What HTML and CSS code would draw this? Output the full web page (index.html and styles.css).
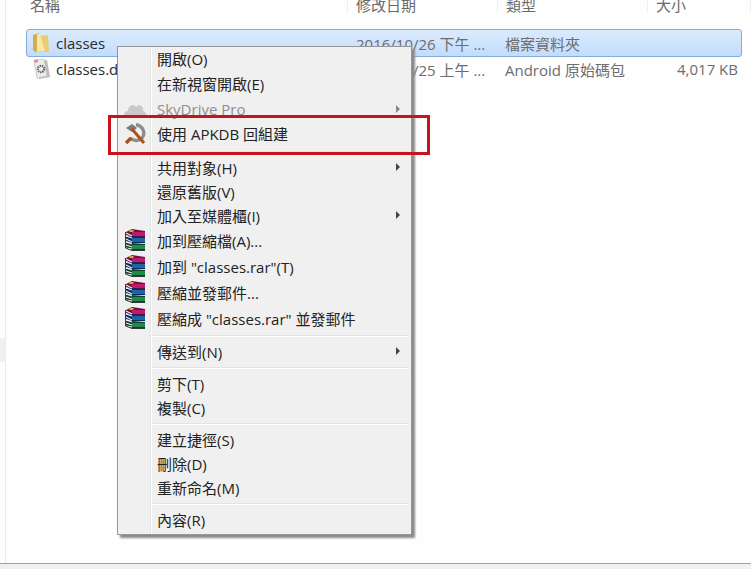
FILE: index.html
```html
<!DOCTYPE html>
<html lang="zh-Hant">
<head>
    <meta charset="UTF-8">
    <title>classes</title>
    <link rel="stylesheet" href="styles.css">
</head>
<body>
    <svg class="defs" width="0" height="0">
      <symbol id="rar" viewBox="0 0 22 22">
        <path d="M2 3 L8 0 L21 2 L21 8 L8 8 L2 6Z" fill="#6e1240"/>
        <path d="M8 3 L21 3 L21 7 L8 7Z" fill="#c2186e"/>
        <path d="M6 1 L10 1 L9 3 L5 3Z" fill="#d8a838"/>
        <path d="M2 8 L8 7 L21 8 L21 14 L8 14 L2 12Z" fill="#10285e"/>
        <path d="M8 9 L21 9 L21 13 L8 13Z" fill="#1c64a8"/>
        <path d="M2 14 L8 14 L21 15 L21 21 L8 21 L2 19Z" fill="#0c4426"/>
        <path d="M8 16 L21 16 L21 20 L8 20Z" fill="#1c8c4c"/>
        <path d="M2 4 L8 7 M2 7 L8 9 M2 10 L8 13 M2 13 L8 15 M2 16 L8 18 M2 19 L8 20" stroke="#f0f0f0" stroke-width="1.1" fill="none"/>
        <path d="M1.5 3 L1.5 19 L8 21.5 L21 21.5" stroke="#222" stroke-width=".9" fill="none"/>
      </symbol>
    </svg>

    <div class="explorer">
      <div class="list-head">
        <div class="head-cell">名稱</div>
        <div class="head-cell">修改日期</div>
        <div class="head-cell">類型</div>
        <div class="head-cell">大小</div>
      </div>

      <div class="file-row selected">
        <div class="cell name">
          <svg class="file-icon" viewBox="0 0 20 20">
            <path d="M2 2 L8 0 L9 2 L9 19 L4 19 L2 17Z" fill="#d4ae48"/>
            <path d="M9 3 L17 2 L18 19 L9 19Z" fill="#e8cb72"/>
            <path d="M6 1 L9 1 L14 18 L6 19Z" fill="#f7e8a8"/>
          </svg>
          classes
        </div>
        <div class="cell muted">2016/10/26 下午 ...</div>
        <div class="cell muted">檔案資料夾</div>
        <div class="cell size"></div>
      </div>

      <div class="file-row">
        <div class="cell name">
          <svg class="file-icon" viewBox="0 0 20 20">
            <path d="M5 3 L16 1 L19 18 L8 20Z" fill="#bdbdbd"/>
            <path d="M3 1 L13 0 L16 17 L6 19Z" fill="#ededed" stroke="#c0c0c0" stroke-width=".8"/>
            <path d="M3 1 L7 1 L7 3 L4 4Z" fill="#e88a8a"/>
            <circle cx="10" cy="10" r="3.2" fill="none" stroke="#666" stroke-width="2.2" stroke-dasharray="1.4 .8"/>
          </svg>
          classes.dex
        </div>
        <div class="cell muted">2016/10/25 上午 ...</div>
        <div class="cell muted">Android 原始碼包</div>
        <div class="cell size muted">4,017 KB</div>
      </div>
    </div>

    <div class="side-tab"></div>

    <div class="menu">
      <div class="item"><span class="gutter"></span>開啟(O)</div>
      <div class="item"><span class="gutter"></span>在新視窗開啟(E)</div>
      <div class="item disabled">
        <span class="gutter">
          <svg class="menu-icon" viewBox="0 0 22 22">
            <path d="M4 20 C-1 20 -1 13 4 13 C4 7 10 5 12 9 C15 5 20 8 19 13 C23 13 23 20 18 20Z" fill="#c9c9c9"/>
          </svg>
        </span>
        SkyDrive Pro<span class="arrow"></span>
      </div>
      <div class="item">
        <span class="gutter">
          <svg class="menu-icon" viewBox="0 0 22 22">
            <path d="M12 1.5 C19 3 22 10 18 15 C15 18.5 9 18 6 15" fill="none" stroke="#8c8c8c" stroke-width="3.4"/>
            <path d="M2 5 L8 1 L13 5 L8 9Z" fill="#7a7a7a"/>
            <path d="M8 6 L20 20" stroke="#b0501c" stroke-width="3"/>
            <path d="M7 15 L2 20" stroke="#b0501c" stroke-width="3.4"/>
          </svg>
        </span>
        使用 APKDB 回組建
      </div>

      <div class="sep first"></div>

      <div class="item short"><span class="gutter"></span>共用對象(H)<span class="arrow"></span></div>
      <div class="item short"><span class="gutter"></span>還原舊版(V)</div>
      <div class="item short"><span class="gutter"></span>加入至媒體櫃(I)<span class="arrow"></span></div>
      <div class="item tall"><span class="gutter"><svg class="menu-icon"><use href="#rar"/></svg></span>加到壓縮檔(A)...</div>
      <div class="item tall"><span class="gutter"><svg class="menu-icon"><use href="#rar"/></svg></span>加到 "classes.rar"(T)</div>
      <div class="item tall"><span class="gutter"><svg class="menu-icon"><use href="#rar"/></svg></span>壓縮並發郵件...</div>
      <div class="item tall"><span class="gutter"><svg class="menu-icon"><use href="#rar"/></svg></span>壓縮成 "classes.rar" 並發郵件</div>

      <div class="sep"></div>

      <div class="item short"><span class="gutter"></span>傳送到(N)<span class="arrow"></span></div>

      <div class="sep"></div>

      <div class="item short"><span class="gutter"></span>剪下(T)</div>
      <div class="item short"><span class="gutter"></span>複製(C)</div>

      <div class="sep"></div>

      <div class="item short"><span class="gutter"></span>建立捷徑(S)</div>
      <div class="item short"><span class="gutter"></span>刪除(D)</div>
      <div class="item short"><span class="gutter"></span>重新命名(M)</div>

      <div class="sep"></div>

      <div class="item short"><span class="gutter"></span>內容(R)</div>
    </div>

    <div class="highlight"></div>

    <div class="status-bar"></div>
</body>
</html>
```

FILE: styles.css
```css
* {
    box-sizing: border-box;
    margin: 0;
    padding: 0;
}

body {
    width: 751px;
    height: 569px;
    overflow: hidden;
    position: relative;
    display: flex;
    flex-direction: column;
    background: #fefefe;
    color: #222;
    font-family: "Open Sans", "Noto Sans CJK TC", sans-serif;
    font-size: 15px;
}

.defs {
    position: absolute;
}

.explorer {
    flex: 1;
    margin-left: 5px;
    border-left: 1px solid #e4eef8;
    padding-left: 20px;
}

.list-head {
    display: grid;
    grid-template-columns: 322px 150px 150px 1fr;
    height: 15px;
    margin-top: -3px;
    margin-bottom: 17px;
    color: #6a6a6a;
}

.head-cell {
    padding-left: 8px;
    line-height: 16px;
    border-right: 1px solid #eceff3;
}

.head-cell:first-child {
    padding-left: 4px;
}

.file-row {
    display: grid;
    grid-template-columns: 321px 149px 150px 1fr;
    align-items: center;
    width: 716px;
    height: 24px;
    border: 1px solid transparent;
    color: #6d6d6d;
}

.selected {
    height: 28px;
    border-color: #84acd4;
    border-radius: 3px;
    background: linear-gradient(to bottom, #dcebfc, #c2dcfd);
}

.cell {
    padding-left: 8px;
    white-space: nowrap;
}

.name {
    display: flex;
    align-items: center;
    gap: 5px;
    padding-left: 4px;
    color: #2b2b2b;
}

.size {
    padding: 0 3px 0 0;
    text-align: right;
}

.file-icon {
    width: 20px;
    height: 20px;
}

.side-tab {
    position: absolute;
    left: 0;
    top: 338px;
    width: 5px;
    height: 24px;
    background: #f0f0f0;
}

.menu {
    position: absolute;
    left: 117px;
    top: 46px;
    width: 295px;
    height: 489px;
    padding: 0 2px;
    border: 1px solid #979797;
    box-shadow: 3px 3px 2px #8a8a8a;
    background: linear-gradient(to right, #f0f0f0 32px, #e2e3e3 32px, #e2e3e3 33px, #fff 33px, #fff 34px, #f0f0f0 34px);
}

.item {
    position: relative;
    display: flex;
    align-items: center;
    height: 25px;
    padding-bottom: 2px;
    white-space: nowrap;
}

.short {
    height: 24px;
}

.tall {
    height: 26px;
}

.disabled {
    color: #8f8f8f;
}

.gutter {
    display: flex;
    align-items: center;
    justify-content: center;
    flex: none;
    width: 37px;
    height: 100%;
}

.menu-icon {
    width: 22px;
    height: 22px;
    flex: none;
    margin-right: 8px;
}

.arrow {
    position: absolute;
    right: 9px;
    top: 50%;
    margin-top: -5px;
    border-left: 4px solid #444;
    border-top: 4px solid transparent;
    border-bottom: 4px solid transparent;
}

.disabled .arrow {
    border-left-color: #888;
}

.sep {
    height: 2px;
    margin: 3px 0 3px 33px;
    border-top: 1px solid #e2e3e3;
    border-bottom: 1px solid #fff;
}

.first {
    margin-top: 4px;
}

.highlight {
    position: absolute;
    left: 108px;
    top: 115px;
    width: 322px;
    height: 40px;
    border: 3px solid #c8121c;
}

.status-bar {
    height: 6px;
    flex: none;
    border-top: 1px solid #a0a0a0;
    background: #f0f0f0;
}
```
